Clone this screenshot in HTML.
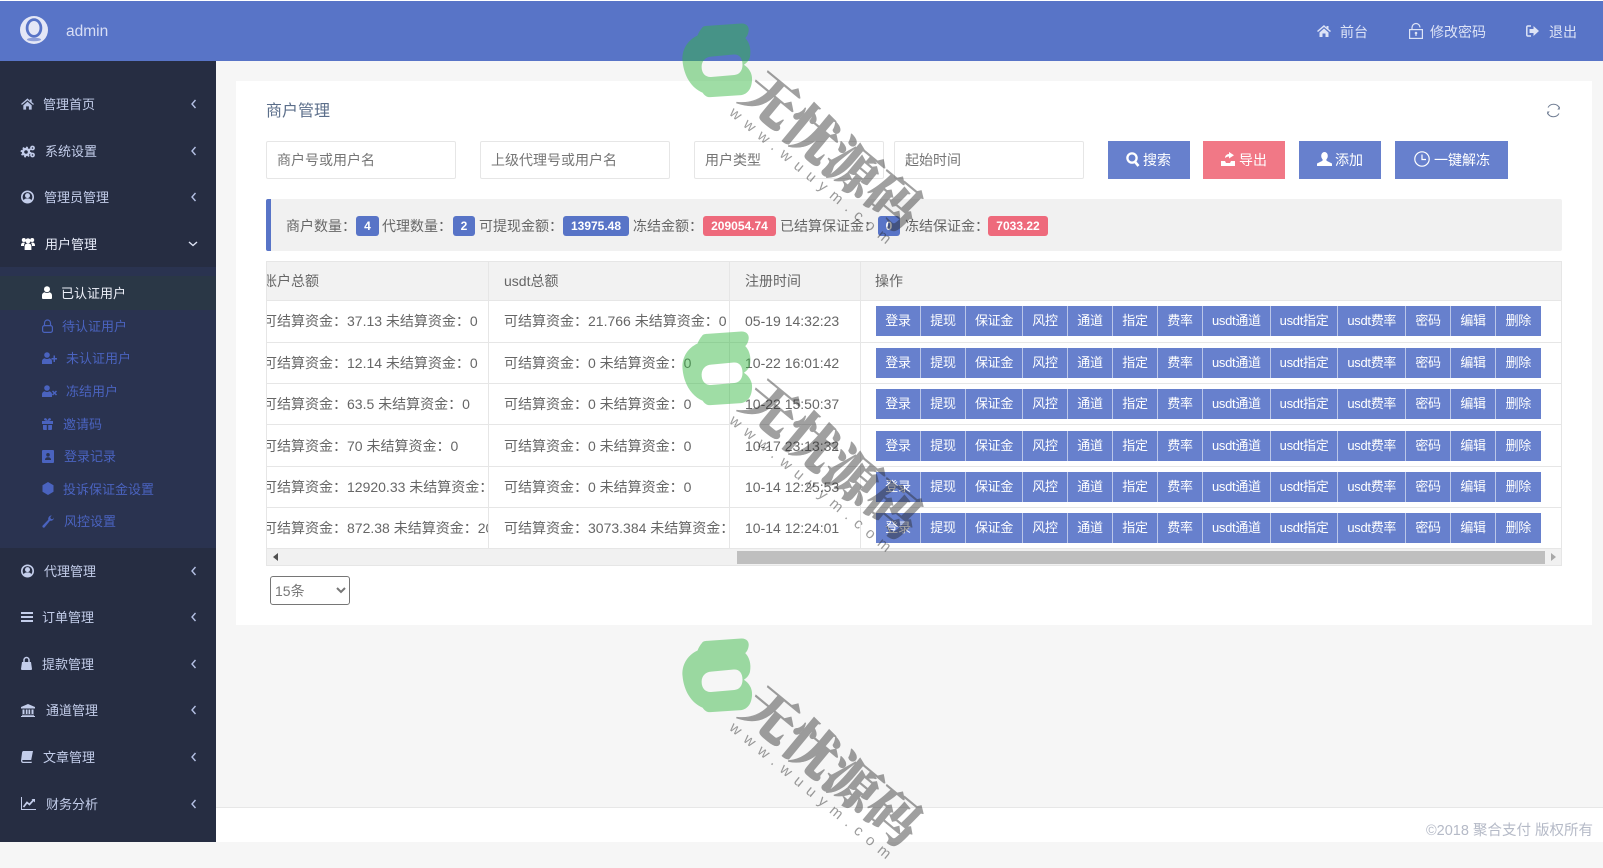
<!DOCTYPE html>
<html lang="zh">
<head>
<meta charset="utf-8">
<title>商户管理</title>
<style>
*{box-sizing:border-box}
html,body{margin:0;padding:0;width:1603px;height:100%;overflow:hidden;background:#f6f6f6;font-family:"Liberation Sans","Noto Sans CJK SC",sans-serif;color:#666}
.a,.t,.m,.s,svg.i{position:absolute}
.t{white-space:nowrap;line-height:20px;font-size:14px;padding-top:1px}
.m{white-space:nowrap;line-height:20px;font-size:13px;color:#c3cdea;padding-top:1px}
.s{white-space:nowrap;line-height:20px;font-size:13px;color:#4a63bf;padding-top:1px}
svg.i{fill:currentColor;overflow:visible}
.inp{position:absolute;top:141px;height:38px;background:#fff;border:1px solid #e6e6e6;border-radius:2px;font-size:14px;line-height:36px;padding-left:10px;color:#757575}
.bt{position:absolute;top:141px;height:38px;color:#fff;background:#6780cd}
.bg{position:absolute;top:216px;height:20px;border-radius:3px;color:#fff;font-size:12px;font-weight:bold;line-height:20px;text-align:center;background:#5874c7}
.r{background:#ee6a7c}
.h{position:absolute;left:267px;width:1294px;height:1px;background:#e6e6e6}
.v{position:absolute;top:262px;width:1px;height:286px;background:#e6e6e6}
.c{position:absolute;overflow:hidden;height:21px;line-height:20px;font-size:14px;white-space:nowrap;color:#666;padding-top:1px}
.row{position:absolute;left:876px;height:30px;display:flex;background:#6780cd;color:#fff;font-size:13px;line-height:30px;text-align:center}
.row span{display:block;width:45px;border-right:1px solid rgba(255,255,255,.55);white-space:nowrap;letter-spacing:-.3px}
.row span.w3{width:57px}
.row span.wu{width:67.7px}
.row span:last-child{border-right:0;width:44.5px}
.wm1{position:absolute;left:752px;height:50px;line-height:50px;font-size:53px;font-weight:900;font-family:"Noto Serif CJK SC","Noto Sans CJK SC",serif;color:rgb(40,40,40);opacity:.44;-webkit-text-stroke:.7px rgb(40,40,40);transform-origin:0 50%;transform:rotate(39.6deg);white-space:nowrap;pointer-events:none}
.wm2{position:absolute;left:731px;height:18px;line-height:18px;font-size:15px;color:rgba(40,40,40,.46);letter-spacing:7.4px;transform-origin:0 50%;transform:rotate(39.6deg);white-space:nowrap;pointer-events:none}
.wml{position:absolute;left:673px;width:92px;height:92px;pointer-events:none}
select{position:absolute;left:270px;top:576px;width:80px;height:29px;font-size:14px;font-family:"Liberation Sans","Noto Sans CJK SC",sans-serif;color:#777;background:#fff;border:1px solid #767676;border-radius:3px;padding-left:0}
</style>
</head>
<body>
<!-- header -->
<div class="a" style="left:0;top:0;width:1603px;height:1px;background:#fff"></div>
<div class="a" style="left:0;top:1px;width:1603px;height:60px;background:#5874c7"></div>
<svg class="i" style="left:20px;top:16px" width="28" height="28" viewBox="0 0 28 28"><circle cx="14" cy="14" r="14" fill="#e4e7f6"/><ellipse cx="14" cy="12" rx="8.300" ry="9.800" fill="#5874c7"/><ellipse cx="14" cy="12" rx="5.500" ry="7" fill="#e4e7f6"/><ellipse cx="14" cy="23.500" rx="7" ry="1.800" fill="#8fa0da"/></svg>
<div class="t" style="left:66px;top:21px;font-size:15.5px;color:#d8def5">admin</div>

<svg class="i" style="left:1317px;top:25px;color:#dde3f6" width="14" height="12" viewBox="0 0 14 12"><path d="M7 0L0 6l1 1 6-5 6 5 1-1-2.500-2V1h-2v1.500z M2.500 7.500L7 3.500l4.500 4V12H8.500V8.500h-3V12h-3z"/></svg>
<div class="t" style="left:1340px;top:21px;color:#dde3f6">前台</div>
<svg class="i" style="left:1409px;top:23px;color:#dde3f6" width="14" height="16" viewBox="0 0 14 16"><path d="M3 6V4.500a4 4 0 0 1 8 0" fill="none" stroke="currentColor" stroke-width="1.200"/><rect x=".6" y="6.600" width="12.800" height="8.800" fill="none" stroke="currentColor" stroke-width="1.200"/><circle cx="7" cy="10" r="1.300"/><rect x="6.400" y="10" width="1.200" height="3"/></svg>
<div class="t" style="left:1430px;top:21px;color:#dde3f6">修改密码</div>
<svg class="i" style="left:1526px;top:25px;color:#dde3f6" width="13" height="12" viewBox="0 0 13 12"><path d="M5 1H1.800A1 1 0 0 0 .8 2v8a1 1 0 0 0 1 1H5" fill="none" stroke="currentColor" stroke-width="1.500"/><path d="M7.500 1L13 6l-5.500 5V8H3.500V4h4z"/></svg>
<div class="t" style="left:1549px;top:21px;color:#dde3f6">退出</div>

<!-- sidebar -->
<div class="a" style="left:0;top:61px;width:216px;bottom:0;background:#262d42"></div>
<div class="a" style="left:0;top:267px;width:216px;height:281px;background:#2a3350"></div>
<div class="a" style="left:0;top:276px;width:216px;height:34px;background:#2a3746"></div>

<svg class="i" style="left:21px;top:98px;color:#b9c4e4" width="13" height="12" viewBox="0 0 14 12"><path d="M7 0L0 6l1 1 6-5 6 5 1-1-2.500-2V1h-2v1.500z M2.500 7.500L7 3.500l4.500 4V12H8.500V8.500h-3V12h-3z"/></svg>
<div class="m" style="left:43px;top:94px">管理首页</div>
<svg class="i" style="left:21px;top:145px;color:#c3cdea" width="14" height="13" viewBox="0 0 14 13"><circle cx="5" cy="7" r="3" fill="none" stroke="currentColor" stroke-width="2.400"/><circle cx="5" cy="7" r="4.600" fill="none" stroke="currentColor" stroke-width="1.600" stroke-dasharray="1.800 1.800"/><circle cx="11.500" cy="3" r="1.600" fill="none" stroke="currentColor" stroke-width="1.600"/><circle cx="11.500" cy="10" r="1.600" fill="none" stroke="currentColor" stroke-width="1.600"/></svg>
<div class="m" style="left:45px;top:141px">系统设置</div>
<svg class="i" style="left:21px;top:190px;color:#c3cdea" width="13" height="14" viewBox="0 0 13 14"><circle cx="6.500" cy="7" r="5.700" fill="none" stroke="currentColor" stroke-width="1.600"/><circle cx="6.500" cy="5.600" r="2.500"/><path d="M2.300 11c.7-2 2.300-2.600 4.200-2.600s3.500.6 4.200 2.600L6.500 13z"/></svg>
<div class="m" style="left:44px;top:187px">管理员管理</div>
<svg class="i" style="left:21px;top:237px;color:#fff" width="14" height="13" viewBox="0 0 14 13"><circle cx="2.800" cy="3" r="2"/><circle cx="11.200" cy="3" r="2"/><circle cx="7" cy="3.800" r="2.600"/><path d="M0 8.500c0-2 1-3 2.600-3 .6 0 1 .2 1.300.5C3.200 7 3 8 3 9H0z M14 8.500c0-2-1-3-2.600-3-.6 0-1 .2-1.300.5.700 1 .900 2 .900 3h3z M3.600 13V9.500c0-2 1.200-3 3.400-3s3.400 1 3.400 3V13z"/></svg>
<div class="m" style="left:45px;top:234px;color:#e8edfa">用户管理</div>

<svg class="i" style="left:42px;top:286px;color:#fff" width="10" height="13" viewBox="0 0 10 13"><circle cx="5" cy="3.200" r="3"/><path d="M0 12v-2.500C0 7.500 1.500 6.500 2.800 6.300c1.300 1 3.100 1 4.400 0C8.500 6.500 10 7.500 10 9.500V12a1 1 0 0 1-1 1H1a1 1 0 0 1-1-1z"/></svg>
<div class="s" style="left:61px;top:283px;color:#eef1fa">已认证用户</div>
<svg class="i" style="left:42px;top:319px;color:#4a63bf" width="11" height="14" viewBox="0 0 11 14"><path d="M2.500 6V4a3 3 0 0 1 6 0v2" fill="none" stroke="currentColor" stroke-width="1.200"/><rect x=".6" y="6.600" width="9.800" height="6.800" rx="1.800" fill="none" stroke="currentColor" stroke-width="1.200"/></svg>
<div class="s" style="left:62px;top:316px">待认证用户</div>
<svg class="i" style="left:42px;top:352px;color:#4a63bf" width="15" height="12" viewBox="0 0 15 12"><circle cx="5" cy="3" r="2.800"/><path d="M0 12V9.500C0 7.500 1.500 6.500 2.800 6.300c1.300 1 3.100 1 4.400 0C8.500 6.500 10 7.500 10 9.500V12z"/><path d="M11.500 3.500h1.500v2.500h2v1.500h-2V10h-1.500V7.500H9.500V6h2z"/></svg>
<div class="s" style="left:66px;top:348px">未认证用户</div>
<svg class="i" style="left:42px;top:385px;color:#4a63bf" width="15" height="12" viewBox="0 0 15 12"><circle cx="5" cy="3" r="2.800"/><path d="M0 12V9.500C0 7.500 1.500 6.500 2.800 6.300c1.300 1 3.100 1 4.400 0C8.500 6.500 10 7.500 10 9.500V12z"/><path d="M10.500 6l4 4M14.500 6l-4 4" stroke="currentColor" stroke-width="1.500"/></svg>
<div class="s" style="left:66px;top:381px">冻结用户</div>
<svg class="i" style="left:42px;top:418px;color:#4a63bf" width="11" height="12" viewBox="0 0 11 12"><path d="M0 3h11v3H0z M1 7h3.800v5H2a1 1 0 0 1-1-1z M6.200 7H10v4a1 1 0 0 1-1 1H6.200z M5.500 3C4 3 2 2.500 2 1.300 2 .5 3 0 3.800.2 4.800.5 5.500 2 5.500 3c0-1 .7-2.500 1.700-2.800C8 0 9 .5 9 1.300 9 2.500 7 3 5.500 3z"/></svg>
<div class="s" style="left:63px;top:414px">邀请码</div>
<svg class="i" style="left:42px;top:450px;color:#4a63bf" width="12" height="13" viewBox="0 0 12 13"><path d="M1 0h10a1 1 0 0 1 1 1v11a1 1 0 0 1-1 1H1a1 1 0 0 1-1-1V1a1 1 0 0 1 1-1z M6 3a1.800 1.800 0 1 0 0 3.600A1.800 1.800 0 0 0 6 3z M3 10h6c0-1.800-1-2.800-3-2.800S3 8.200 3 10z" fill-rule="evenodd"/></svg>
<div class="s" style="left:64px;top:446px">登录记录</div>
<svg class="i" style="left:42px;top:482px;color:#4a63bf" width="12" height="13" viewBox="0 0 12 13"><path d="M6 0l5.500 3.200v6.600L6 13 .5 9.800V3.200z"/></svg>
<div class="s" style="left:63px;top:479px">投诉保证金设置</div>
<svg class="i" style="left:42px;top:515px;color:#4a63bf" width="12" height="13" viewBox="0 0 12 13"><path d="M12 2.500C12 4.800 10 6.200 8 5.700L2.500 12.500a1.400 1.400 0 0 1-2-1.800L6.300 4.800C5.800 2.500 7.500.4 9.800.4L8.200 2.200 9 4l2 .1z"/></svg>
<div class="s" style="left:64px;top:511px">风控设置</div>

<svg class="i" style="left:21px;top:564px;color:#c3cdea" width="13" height="14" viewBox="0 0 13 14"><circle cx="6.500" cy="7" r="5.700" fill="none" stroke="currentColor" stroke-width="1.600"/><circle cx="6.500" cy="5.600" r="2.500"/><path d="M2.300 11c.7-2 2.300-2.600 4.200-2.600s3.500.6 4.200 2.600L6.500 13z"/></svg>
<div class="m" style="left:44px;top:561px">代理管理</div>
<svg class="i" style="left:21px;top:612px;color:#c3cdea" width="12" height="10" viewBox="0 0 12 10"><path d="M0 0h12v2H0z M0 4h12v2H0z M0 8h12v2H0z"/></svg>
<div class="m" style="left:42px;top:607px">订单管理</div>
<svg class="i" style="left:21px;top:657px;color:#c3cdea" width="11" height="13" viewBox="0 0 11 13"><path d="M3 5V3a2.500 2.500 0 0 1 5 0v2" fill="none" stroke="currentColor" stroke-width="1.500"/><path d="M1 5h9l1 7a1 1 0 0 1-1 1H1a1 1 0 0 1-1-1z"/></svg>
<div class="m" style="left:42px;top:654px">提款管理</div>
<svg class="i" style="left:21px;top:704px;color:#c3cdea" width="14" height="13" viewBox="0 0 14 13"><path d="M7 0l7 3v1.500H0V3z M1.500 5.500h2V10h-2z M4.800 5.500h1.700V10H4.800z M7.500 5.500h1.700V10H7.500z M10.500 5.500h2V10h-2z M1 10.800h12v.9H1z M0 12h14v1H0z"/></svg>
<div class="m" style="left:46px;top:700px">通道管理</div>
<svg class="i" style="left:21px;top:751px;color:#c3cdea" width="12" height="12" viewBox="0 0 12 12"><path d="M2.500 0H12l-1.800 9H2.200C1.300 9 1 9.500 1.300 10s.6.800 1.200.8h8.500L10.500 12H2C.7 12 0 11 0 9.800.1 9 .8 3.500 1 2 1.100 1 1.500 0 2.500 0z"/></svg>
<div class="m" style="left:43px;top:747px">文章管理</div>
<svg class="i" style="left:21px;top:797px;color:#c3cdea" width="15" height="13" viewBox="0 0 15 13"><path d="M0 0h1v12h14v1H0z"/><path d="M2.500 10L6 5.500l2.500 2L13 2.500" fill="none" stroke="currentColor" stroke-width="1.700"/><path d="M10.500 2H14v3.500z"/></svg>
<div class="m" style="left:46px;top:794px">财务分析</div>

<svg class="i" style="left:191px;top:99px;color:#b4c0e4" width="5" height="10" viewBox="0 0 5 10"><path d="M4.500 1L1 5l3.500 4" fill="none" stroke="currentColor" stroke-width="1.400"/></svg>
<svg class="i" style="left:191px;top:146px;color:#b4c0e4" width="5" height="10" viewBox="0 0 5 10"><path d="M4.500 1L1 5l3.500 4" fill="none" stroke="currentColor" stroke-width="1.400"/></svg>
<svg class="i" style="left:191px;top:192px;color:#b4c0e4" width="5" height="10" viewBox="0 0 5 10"><path d="M4.500 1L1 5l3.500 4" fill="none" stroke="currentColor" stroke-width="1.400"/></svg>
<svg class="i" style="left:188px;top:241px;color:#dfe5f6" width="10" height="6" viewBox="0 0 10 6"><path d="M1 1l4 3.500L9 1" fill="none" stroke="currentColor" stroke-width="1.400"/></svg>
<svg class="i" style="left:191px;top:566px;color:#b4c0e4" width="5" height="10" viewBox="0 0 5 10"><path d="M4.500 1L1 5l3.500 4" fill="none" stroke="currentColor" stroke-width="1.400"/></svg>
<svg class="i" style="left:191px;top:612px;color:#b4c0e4" width="5" height="10" viewBox="0 0 5 10"><path d="M4.500 1L1 5l3.500 4" fill="none" stroke="currentColor" stroke-width="1.400"/></svg>
<svg class="i" style="left:191px;top:659px;color:#b4c0e4" width="5" height="10" viewBox="0 0 5 10"><path d="M4.500 1L1 5l3.500 4" fill="none" stroke="currentColor" stroke-width="1.400"/></svg>
<svg class="i" style="left:191px;top:705px;color:#b4c0e4" width="5" height="10" viewBox="0 0 5 10"><path d="M4.500 1L1 5l3.500 4" fill="none" stroke="currentColor" stroke-width="1.400"/></svg>
<svg class="i" style="left:191px;top:752px;color:#b4c0e4" width="5" height="10" viewBox="0 0 5 10"><path d="M4.500 1L1 5l3.500 4" fill="none" stroke="currentColor" stroke-width="1.400"/></svg>
<svg class="i" style="left:191px;top:799px;color:#b4c0e4" width="5" height="10" viewBox="0 0 5 10"><path d="M4.500 1L1 5l3.500 4" fill="none" stroke="currentColor" stroke-width="1.400"/></svg>

<!-- card -->
<div class="a" style="left:236px;top:81px;width:1356px;height:544px;background:#fff"></div>
<div class="t" style="left:266px;top:101px;font-size:16px;color:#5b6e8a">商户管理</div>
<svg class="i" style="left:1546px;top:103px;color:#6f7c92" width="15" height="15" viewBox="0 0 15 15"><path d="M2 4.500A6.500 6.500 0 0 1 13.500 5M13 10.500A6.500 6.500 0 0 1 1.500 10" fill="none" stroke="currentColor" stroke-width="1"/><path d="M13.800 3.500v3h-2.500z M1.200 11.500v-3h2.500z"/></svg>

<div class="inp" style="left:266px;width:190px">商户号或用户名</div>
<div class="inp" style="left:480px;width:190px">上级代理号或用户名</div>
<div class="inp" style="left:694px;width:190px">用户类型</div>
<div class="inp" style="left:894px;width:190px">起始时间</div>

<div class="bt" style="left:1108px;width:82px"></div>
<svg class="i" style="left:1126px;top:152px;color:#fff" width="14" height="15" viewBox="0 0 14 15"><circle cx="6" cy="6" r="4.600" fill="none" stroke="currentColor" stroke-width="2.300"/><path d="M9 9.800l3.500 4.200" stroke="currentColor" stroke-width="2.600"/></svg>
<div class="t" style="left:1143px;top:149px;color:#fff">搜索</div>
<div class="bt" style="left:1203px;width:82px;background:#f17886"></div>
<svg class="i" style="left:1221px;top:152px;color:#fff" width="14" height="14" viewBox="0 0 14 14"><path d="M0 9h4l1 2h4l1-2h4v5H0z M4 6c0-2.500 2-4 4-4V0l5 3.200L8 6.500V4.500C6 4.500 5 5.500 4 6z"/></svg>
<div class="t" style="left:1239px;top:149px;color:#fff">导出</div>
<div class="bt" style="left:1299px;width:82px"></div>
<svg class="i" style="left:1317px;top:152px;color:#fff" width="15" height="14" viewBox="0 0 15 14"><ellipse cx="7.500" cy="4" rx="3.300" ry="4"/><path d="M5.500 7.500v1.300L0 11.500V14h15v-2.500L9.500 8.800V7.500z"/></svg>
<div class="t" style="left:1335px;top:149px;color:#fff">添加</div>
<div class="bt" style="left:1395px;width:113px"></div>
<svg class="i" style="left:1414px;top:151px;color:#fff" width="16" height="16" viewBox="0 0 16 16"><circle cx="8" cy="8" r="7.200" fill="none" stroke="currentColor" stroke-width="1.200"/><path d="M8 3.500V8.500H12" fill="none" stroke="currentColor" stroke-width="1.200"/></svg>
<div class="t" style="left:1434px;top:149px;color:#fff">一键解冻</div>

<!-- alert -->
<div class="a" style="left:266px;top:199px;width:1296px;height:52px;background:#f1f1f1;border-left:5px solid #5874c7;border-radius:2px"></div>
<div class="t" style="left:286px;top:215px">商户数量：</div>
<div class="bg" style="left:356px;width:23px">4</div>
<div class="t" style="left:382px;top:215px">代理数量：</div>
<div class="bg" style="left:453px;width:22px">2</div>
<div class="t" style="left:479px;top:215px">可提现金额：</div>
<div class="bg" style="left:563px;width:66px">13975.48</div>
<div class="t" style="left:633px;top:215px">冻结金额：</div>
<div class="bg r" style="left:703px;width:73px">209054.74</div>
<div class="t" style="left:780px;top:215px">已结算保证金：</div>
<div class="bg" style="left:878px;width:22px">0</div>
<div class="t" style="left:905px;top:215px">冻结保证金：</div>
<div class="bg r" style="left:988px;width:60px">7033.22</div>

<!-- table -->
<div class="a" style="left:266px;top:261px;width:1296px;height:305px;border:1px solid #e6e6e6;background:#fff"></div>
<div class="a" style="left:267px;top:262px;width:1294px;height:38px;background:#f2f2f2"></div>
<div class="a" style="left:267px;top:549px;width:1294px;height:16px;background:#f1f1f1"></div>
<div class="a" style="left:737px;top:551px;width:808px;height:13px;background:#bfbfbf"></div>
<svg class="i" style="left:273px;top:553px;color:#505050" width="5" height="8" viewBox="0 0 5 8"><path d="M5 0v8L0 4z"/></svg>
<svg class="i" style="left:1551px;top:553px;color:#a8a8a8" width="5" height="8" viewBox="0 0 5 8"><path d="M0 0v8l5-4z"/></svg>
<div class="h" style="top:300px"></div>
<div class="h" style="top:342px"></div>
<div class="h" style="top:383px"></div>
<div class="h" style="top:424px"></div>
<div class="h" style="top:466px"></div>
<div class="h" style="top:507px"></div>
<div class="h" style="top:548px"></div>
<div class="v" style="left:488px"></div>
<div class="v" style="left:729px"></div>
<div class="v" style="left:860px"></div>

<div class="c" style="left:267px;top:270px;width:221px"><span style="margin-left:-4px">账户总额</span></div>
<div class="c" style="left:504px;top:270px;width:224px">usdt总额</div>
<div class="c" style="left:745px;top:270px;width:114px">注册时间</div>
<div class="c" style="left:875px;top:270px;width:100px">操作</div>

<div class="c" style="left:267px;top:310px;width:221px"><span style="margin-left:-4px">可结算资金：37.13 未结算资金：0</span></div>
<div class="c" style="left:504px;top:310px;width:224px">可结算资金：21.766 未结算资金：0</div>
<div class="c" style="left:745px;top:310px;width:114px">05-19 14:32:23</div>
<div class="c" style="left:267px;top:352px;width:221px"><span style="margin-left:-4px">可结算资金：12.14 未结算资金：0</span></div>
<div class="c" style="left:504px;top:352px;width:224px">可结算资金：0 未结算资金：0</div>
<div class="c" style="left:745px;top:352px;width:114px">10-22 16:01:42</div>
<div class="c" style="left:267px;top:393px;width:221px"><span style="margin-left:-4px">可结算资金：63.5 未结算资金：0</span></div>
<div class="c" style="left:504px;top:393px;width:224px">可结算资金：0 未结算资金：0</div>
<div class="c" style="left:745px;top:393px;width:114px">10-22 15:50:37</div>
<div class="c" style="left:267px;top:435px;width:221px"><span style="margin-left:-4px">可结算资金：70 未结算资金：0</span></div>
<div class="c" style="left:504px;top:435px;width:224px">可结算资金：0 未结算资金：0</div>
<div class="c" style="left:745px;top:435px;width:114px">10-17 23:13:32</div>
<div class="c" style="left:267px;top:476px;width:221px"><span style="margin-left:-4px">可结算资金：12920.33 未结算资金：0</span></div>
<div class="c" style="left:504px;top:476px;width:224px">可结算资金：0 未结算资金：0</div>
<div class="c" style="left:745px;top:476px;width:114px">10-14 12:25:53</div>
<div class="c" style="left:267px;top:517px;width:221px"><span style="margin-left:-4px">可结算资金：872.38 未结算资金：2000</span></div>
<div class="c" style="left:504px;top:517px;width:224px">可结算资金：3073.384 未结算资金：0</div>
<div class="c" style="left:745px;top:517px;width:114px">10-14 12:24:01</div>

<div class="row" style="top:306px"><span>登录</span><span>提现</span><span class="w3">保证金</span><span>风控</span><span>通道</span><span>指定</span><span>费率</span><span class="wu">usdt通道</span><span class="wu">usdt指定</span><span class="wu">usdt费率</span><span>密码</span><span>编辑</span><span>删除</span></div>
<div class="row" style="top:348px"><span>登录</span><span>提现</span><span class="w3">保证金</span><span>风控</span><span>通道</span><span>指定</span><span>费率</span><span class="wu">usdt通道</span><span class="wu">usdt指定</span><span class="wu">usdt费率</span><span>密码</span><span>编辑</span><span>删除</span></div>
<div class="row" style="top:389px"><span>登录</span><span>提现</span><span class="w3">保证金</span><span>风控</span><span>通道</span><span>指定</span><span>费率</span><span class="wu">usdt通道</span><span class="wu">usdt指定</span><span class="wu">usdt费率</span><span>密码</span><span>编辑</span><span>删除</span></div>
<div class="row" style="top:431px"><span>登录</span><span>提现</span><span class="w3">保证金</span><span>风控</span><span>通道</span><span>指定</span><span>费率</span><span class="wu">usdt通道</span><span class="wu">usdt指定</span><span class="wu">usdt费率</span><span>密码</span><span>编辑</span><span>删除</span></div>
<div class="row" style="top:472px"><span>登录</span><span>提现</span><span class="w3">保证金</span><span>风控</span><span>通道</span><span>指定</span><span>费率</span><span class="wu">usdt通道</span><span class="wu">usdt指定</span><span class="wu">usdt费率</span><span>密码</span><span>编辑</span><span>删除</span></div>
<div class="row" style="top:513px"><span>登录</span><span>提现</span><span class="w3">保证金</span><span>风控</span><span>通道</span><span>指定</span><span>费率</span><span class="wu">usdt通道</span><span class="wu">usdt指定</span><span class="wu">usdt费率</span><span>密码</span><span>编辑</span><span>删除</span></div>

<select><option>15条</option></select>

<!-- footer -->
<div class="a" style="left:216px;top:807px;width:1387px;bottom:0;background:#fff;border-top:1px solid #e7e7e7"></div>
<div class="t" style="left:1426px;top:820px;font-size:14.5px;color:#b5bac7">©2018 聚合支付 版权所有</div>

<!-- watermarks -->
<svg class="wml" style="top:15px" viewBox="0 0 270 270"><path fill="rgb(52,183,64)" fill-opacity=".47" fill-rule="evenodd" d="M85 38C88 33 95 32 100 32L200 25C215 24 224 34 222 47C221 56 217 63 212 68C224 80 230 100 226 122C224 132 217 140 208 146C222 155 233 170 232 190C231 215 220 232 200 235L110 241C100 242 92 236 87 228C55 215 32 180 28 135C25 105 40 75 72 60C76 50 80 44 85 38ZM112 122L178 116C194 115 204 126 204 146C204 164 194 175 180 176L112 182C96 183 84 172 84 152C84 134 96 123 112 122Z"/></svg>
<svg class="wml" style="top:323px" viewBox="0 0 270 270"><path fill="rgb(52,183,64)" fill-opacity=".47" fill-rule="evenodd" d="M85 38C88 33 95 32 100 32L200 25C215 24 224 34 222 47C221 56 217 63 212 68C224 80 230 100 226 122C224 132 217 140 208 146C222 155 233 170 232 190C231 215 220 232 200 235L110 241C100 242 92 236 87 228C55 215 32 180 28 135C25 105 40 75 72 60C76 50 80 44 85 38ZM112 122L178 116C194 115 204 126 204 146C204 164 194 175 180 176L112 182C96 183 84 172 84 152C84 134 96 123 112 122Z"/></svg>
<svg class="wml" style="top:630px" viewBox="0 0 270 270"><path fill="rgb(52,183,64)" fill-opacity=".47" fill-rule="evenodd" d="M85 38C88 33 95 32 100 32L200 25C215 24 224 34 222 47C221 56 217 63 212 68C224 80 230 100 226 122C224 132 217 140 208 146C222 155 233 170 232 190C231 215 220 232 200 235L110 241C100 242 92 236 87 228C55 215 32 180 28 135C25 105 40 75 72 60C76 50 80 44 85 38ZM112 122L178 116C194 115 204 126 204 146C204 164 194 175 180 176L112 182C96 183 84 172 84 152C84 134 96 123 112 122Z"/></svg>
<div class="wm1" style="top:56px">无忧源码</div>
<div class="wm2" style="top:102px">www.wuuym.com</div>
<div class="wm1" style="top:364px">无忧源码</div>
<div class="wm2" style="top:410px">www.wuuym.com</div>
<div class="wm1" style="top:671px">无忧源码</div>
<div class="wm2" style="top:717px">www.wuuym.com</div>
</body>
</html>
